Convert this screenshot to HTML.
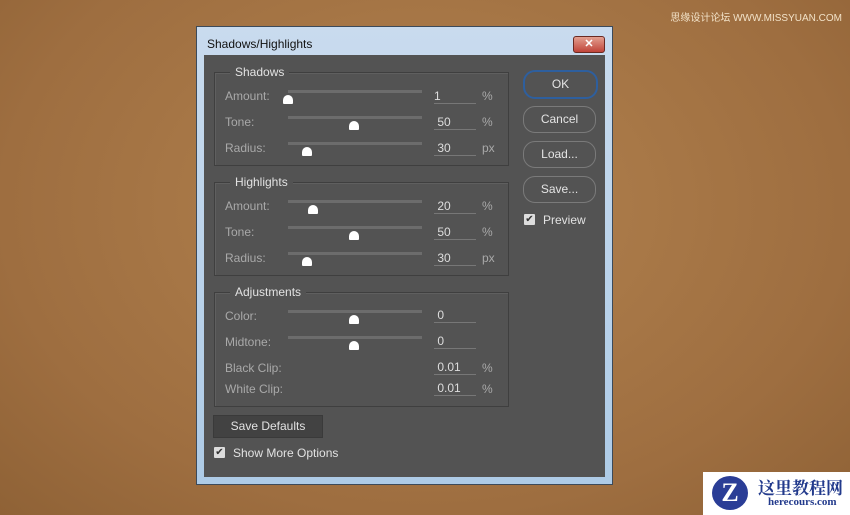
<html><head><style>
body{margin:0;width:850px;height:515px;overflow:hidden;background:radial-gradient(ellipse at 50% 40%,#b3834f,#9e6e40 70%,#8f6236);font-family:"Liberation Sans",sans-serif;position:relative}
.a{position:absolute}
.dlg{left:196px;top:26px;width:417px;height:459px;background:linear-gradient(#c9dbee,#aecbe6);border:1px solid #3c4a5a;box-sizing:border-box}
.in{left:204px;top:55px;width:401px;height:422px;background:#535353}
.t{color:#e2e2e2;font-size:12px}
.l{color:#a9a9a9;font-size:12px}
.g{border:1px solid #3f3f3f;box-shadow:inset 1px 1px 0 #5f5f5f}
.tr{height:3px;background:#6c6c6c;width:134px;left:288px}
.th{width:0;height:0}
.v{color:#ddd;font-size:12px;border-bottom:1px solid #777;width:42px}
.b{border:1px solid #7a7a7a;border-radius:12px;color:#e4e4e4;font-size:12px;text-align:center;width:71px;height:25px;line-height:25px;left:523px}
.cb{width:11px;height:11px;background:#ddd;border-radius:1px;color:#333;font-size:10px;line-height:11px;text-align:center}
.k{width:10px;height:9px;background:#fff;border-radius:5px 5px 1px 1px}
</style></head><body>
<div class="a" style="right:8px;top:9px;color:#f2e2c8;font-size:10px;font-family:'Liberation Sans','Noto Sans CJK SC',sans-serif">思缘设计论坛 WWW.MISSYUAN.COM</div>
<div class="a dlg"></div>
<div class="a" style="left:207px;top:37px;font-size:12px;color:#111">Shadows/Highlights</div>
<div class="a" style="left:573px;top:36px;width:30px;height:15px;background:linear-gradient(#e3a090,#c0443a);border:1px solid #6a2a22;border-radius:3px;color:#fff;font-size:11px;text-align:center;line-height:15px;font-weight:bold">✕</div>
<div class="a in"></div>

<div class="a g" style="left:214px;top:72px;width:293px;height:92px"></div>
<div class="a t" style="left:230px;top:65px;background:#535353;padding:0 5px">Shadows</div>
<div class="a g" style="left:214px;top:182px;width:293px;height:92px"></div>
<div class="a t" style="left:230px;top:175px;background:#535353;padding:0 5px">Highlights</div>
<div class="a g" style="left:214px;top:292px;width:293px;height:113px"></div>
<div class="a t" style="left:230px;top:285px;background:#535353;padding:0 5px">Adjustments</div>

<div class="a l" style="left:225px;top:89px">Amount:</div><div class="a tr" style="top:90px"></div><div class="a k" style="left:283px;top:95px"></div><div class="a v" style="left:434px;top:89px;height:14px">1</div><div class="a l" style="left:482px;top:89px">%</div>
<div class="a l" style="left:225px;top:115px">Tone:</div><div class="a tr" style="top:116px"></div><div class="a k" style="left:349px;top:121px"></div><div class="a v" style="left:434px;top:115px;height:14px">&nbsp;50</div><div class="a l" style="left:482px;top:115px">%</div>
<div class="a l" style="left:225px;top:141px">Radius:</div><div class="a tr" style="top:142px"></div><div class="a k" style="left:302px;top:147px"></div><div class="a v" style="left:434px;top:141px;height:14px">&nbsp;30</div><div class="a l" style="left:482px;top:141px">px</div>

<div class="a l" style="left:225px;top:199px">Amount:</div><div class="a tr" style="top:200px"></div><div class="a k" style="left:308px;top:205px"></div><div class="a v" style="left:434px;top:199px;height:14px">&nbsp;20</div><div class="a l" style="left:482px;top:199px">%</div>
<div class="a l" style="left:225px;top:225px">Tone:</div><div class="a tr" style="top:226px"></div><div class="a k" style="left:349px;top:231px"></div><div class="a v" style="left:434px;top:225px;height:14px">&nbsp;50</div><div class="a l" style="left:482px;top:225px">%</div>
<div class="a l" style="left:225px;top:251px">Radius:</div><div class="a tr" style="top:252px"></div><div class="a k" style="left:302px;top:257px"></div><div class="a v" style="left:434px;top:251px;height:14px">&nbsp;30</div><div class="a l" style="left:482px;top:251px">px</div>

<div class="a l" style="left:225px;top:309px">Color:</div><div class="a tr" style="top:310px"></div><div class="a k" style="left:349px;top:315px"></div><div class="a v" style="left:434px;top:308px;height:14px">&nbsp;0</div>
<div class="a l" style="left:225px;top:335px">Midtone:</div><div class="a tr" style="top:336px"></div><div class="a k" style="left:349px;top:341px"></div><div class="a v" style="left:434px;top:334px;height:14px">&nbsp;0</div>
<div class="a l" style="left:225px;top:361px">Black Clip:</div><div class="a v" style="left:434px;top:360px;height:14px">&nbsp;0.01</div><div class="a l" style="left:482px;top:361px">%</div>
<div class="a l" style="left:225px;top:382px">White Clip:</div><div class="a v" style="left:434px;top:381px;height:14px">&nbsp;0.01</div><div class="a l" style="left:482px;top:382px">%</div>

<div class="a b" style="top:71px;border:2px solid #2e5f9e;top:70px">OK</div>
<div class="a b" style="top:106px">Cancel</div>
<div class="a b" style="top:141px">Load...</div>
<div class="a b" style="top:176px">Save...</div>
<div class="a cb" style="left:524px;top:214px">✔</div><div class="a t" style="left:543px;top:213px">Preview</div>

<div class="a" style="left:213px;top:415px;width:108px;height:21px;background:#424242;border:1px solid #3a3a3a;color:#e2e2e2;font-size:12px;text-align:center;line-height:21px">Save Defaults</div>
<div class="a cb" style="left:214px;top:447px">✔</div><div class="a t" style="left:233px;top:446px">Show More Options</div>

<div class="a" style="left:703px;top:472px;width:147px;height:43px;background:#fff"></div>
<div class="a" style="left:712px;top:476px;width:36px;height:34px;border-radius:50%;background:#2a3d96;color:#fff;font-weight:bold;font-size:26px;text-align:center;line-height:34px;font-family:'Liberation Serif',serif">Z</div>
<div class="a" style="left:758px;top:474px;color:#223a8c;font-weight:bold;font-size:17px;font-family:'Liberation Serif','Noto Serif CJK SC',serif">这里教程网</div>
<div class="a" style="left:768px;top:496px;color:#223a8c;font-weight:bold;font-size:11px;font-family:'Liberation Serif',serif">herecours.com</div>
</body></html>
